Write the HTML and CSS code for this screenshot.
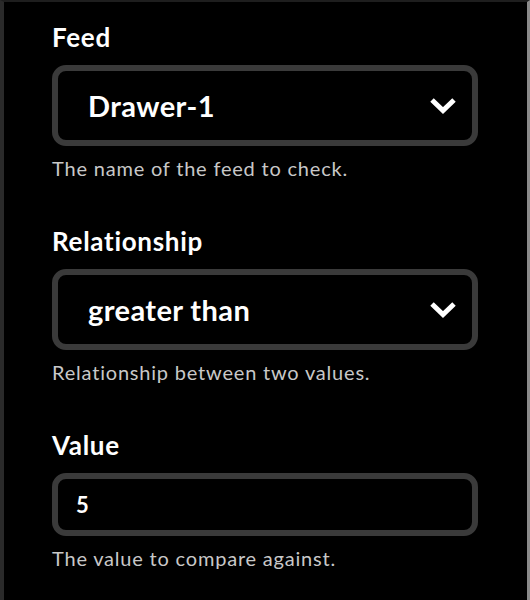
FILE: index.html
```html
<!DOCTYPE html>
<html lang="en">
<head>
  <meta charset="UTF-8" />
  <title>Trigger fields</title>
  <link rel="stylesheet" href="styles.css">
</head>
<body>
  <div class="frame">
    <div class="field">
      <label class="label">Feed</label>
      <div class="select">
        <span class="select-text">Drawer-1</span>
        <svg class="chevron" width="28" height="17" viewBox="0 0 28 17"><polyline points="3,3 14,13.5 25,3" fill="none" stroke="#fff" stroke-width="5" stroke-linejoin="miter"/></svg>
      </div>
      <p class="help">The name of the feed to check.</p>
    </div>

    <div class="field">
      <label class="label">Relationship</label>
      <div class="select">
        <span class="select-text">greater than</span>
        <svg class="chevron" width="28" height="17" viewBox="0 0 28 17"><polyline points="3,3 14,13.5 25,3" fill="none" stroke="#fff" stroke-width="5" stroke-linejoin="miter"/></svg>
      </div>
      <p class="help">Relationship between two values.</p>
    </div>

    <div class="field">
      <label class="label">Value</label>
      <div class="input">5</div>
      <p class="help">The value to compare against.</p>
    </div>
  </div>
</body>
</html>
```

FILE: styles.css
```css
body {
  margin: 0;
  background: #000;
  font-family: Lato, "Open Sans", sans-serif;
  color: #fff;
}

.frame {
  height: 600px;
  box-sizing: border-box;
  border-top: 2px solid #1e1e1e;
  border-left: 4px solid #2a2a2a;
  border-right: 3px solid #8a8a8a;
  padding: 20px 0 0 48px;
  background: #000;
}

.field {
  width: 426px;
  margin-bottom: 46px;
}

.label {
  display: block;
  font-size: 26px;
  line-height: 30px;
  font-weight: 700;
  letter-spacing: 0.7px;
  margin-bottom: 13px;
}

.select,
.input {
  box-sizing: border-box;
  border: 6px solid #3a3a3a;
  border-radius: 14px;
  display: flex;
  align-items: center;
}

.select {
  height: 81px;
  padding: 0 15px 0 30px;
  justify-content: space-between;
}

.select-text {
  font-size: 29px;
  font-weight: 700;
  letter-spacing: 0.4px;
}

.chevron {
  display: block;
}

.input {
  height: 63px;
  padding-left: 18px;
  font-size: 22px;
  font-weight: 700;
}

.help {
  margin: 11px 0 0;
  font-size: 20px;
  line-height: 23px;
  letter-spacing: 0.8px;
  color: #c8c8c8;
}
```
